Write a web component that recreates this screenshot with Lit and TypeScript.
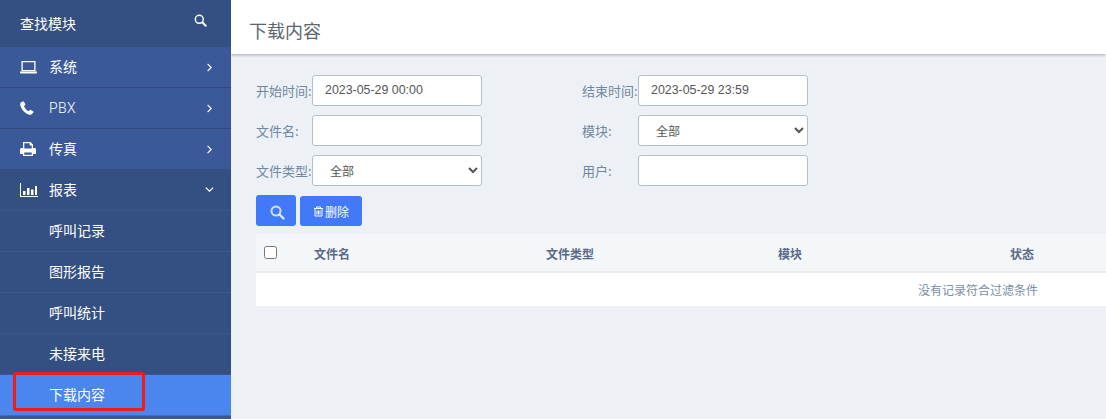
import { LitElement, html, css, svg } from "lit";
import { customElement } from "lit/decorators.js";

const icons: Record<string, any> = {
  laptop: svg`<svg width="17" height="13" viewBox="0 0 17 13"><path fill="none" stroke="#fff" stroke-width="1.300" d="M2.100.7h12.800v9H2.100z"/><path fill="#fff" d="M0 10.600h17v1.100l-.7.8H.7l-.7-.8z"/></svg>`,
  phone: svg`<svg width="14" height="14" viewBox="0 0 14 14"><path fill="#fff" d="M3.200.4 1 1.200C.2 2 0 3.400.500 4.900c1 3.400 4.600 7.500 8.200 8.500 1.300.4 2.500.3 3.300-.3l1.500-1.900c.2-.3.1-.6-.1-.8L10.800 8.900c-.3-.2-.6-.2-.8 0L8.600 10.300c-1.700-.6-4-3.300-4.600-5.300l1.100-1.100c.2-.2.300-.5.2-.8L3.900.7C3.800.4 3.500.3 3.200.4z"/></svg>`,
  print: svg`<svg width="16" height="14" viewBox="0 0 16 14"><path fill="#fff" fill-rule="evenodd" d="M3 0h7.500L13 2.500V6h1.300c1 0 1.700.7 1.700 1.600V12h-3v2H3v-2H0V7.600C0 6.700.7 6 1.700 6H3zM4.300 1.300V6.600h7.400V3.400H9.700V1.300zM4.300 10.400v2.300h7.400v-2.300z"/></svg>`,
  chart: svg`<svg width="18" height="14" viewBox="0 0 18 14"><path fill="#fff" d="M0 0h1v13h17v1H0zM3 8h2.500v4H3zM7 5h2.500v7H7zM11 6.500h2.500V12H11zM15 3h2v9h-2z"/></svg>`,
  search: svg`<svg width="13" height="13" viewBox="0 0 13 13"><circle cx="5.300" cy="5.300" r="4" fill="none" stroke="#fff" stroke-width="1.500"/><path stroke="#fff" stroke-width="2" stroke-linecap="round" d="M8.500 8.500l3.200 3.200"/></svg>`,
  right: svg`<svg width="5" height="9" viewBox="0 0 5 9"><path fill="none" stroke="#fff" stroke-width="1.200" d="M.6.8l3.600 3.700L.6 8.200"/></svg>`,
  down: svg`<svg width="9" height="5" viewBox="0 0 9 5"><path fill="none" stroke="#fff" stroke-width="1.200" d="M.8.6l3.700 3.600L8.200.6"/></svg>`,
};

@customElement("app-root")
export class AppRoot extends LitElement {
  static styles = css`
    :host {
      display: block;
      width: 1106px;
      height: 419px;
      overflow: hidden;
      font-family: "Noto Sans CJK SC", "Liberation Sans", sans-serif;
      font-size: 13px;
    }
    .page { display: flex; height: 419px; background: #edf1f5; position: relative; overflow: hidden; }
    .side { width: 231px; flex: none; background: #3a5795; color: #fff; position: relative; z-index: 2; }
    .find { height: 47px; background: #344f82; display: flex; justify-content: space-between; padding: 12px 24px 0 20px; box-sizing: border-box; font-size: 14px; line-height: 23px; }
    .find svg { margin-top: 2px; }
    .item { height: 41px; box-sizing: border-box; background: #3b5999; border-bottom: 1px solid #31497f; display: grid; grid-template-columns: 29px 1fr 5px; align-items: center; padding: 0 19px 0 20px; font-size: 14px; }
    .item.last { border-bottom: 0; height: 40px; }
    .item.open { height: 42px; background: #344f82; border-bottom: 1px solid #3a5795; grid-template-columns: 29px 1fr 9px; padding-right: 17px; }
    .item .ic { display: flex; align-items: center; }
    .item .lbl { padding-bottom: 2px; }
    .item .pbx { font-family: "Roboto", sans-serif; font-weight: 300; letter-spacing: .4px; }
    .sub { height: 41px; box-sizing: border-box; background: #344f82; border-bottom: 1px solid #3a5795; padding: 0 0 2px 49px; display: flex; align-items: center; font-size: 14px; }
    .sub.active { background: #4a86ee; border-bottom: 1px solid #3f6db8; }
    .redbox { position: absolute; left: 13px; top: 372px; width: 126px; height: 33px; border: 3px solid #f01c1c; border-radius: 3px; }
    .main { flex: 1; min-width: 0; display: flex; flex-direction: column; }
    .top { height: 54px; flex: none; box-sizing: border-box; background: #fff; box-shadow: 0 1px 3px rgba(0,0,0,.3); display: flex; align-items: center; padding: 5px 0 0 18px; font-size: 18px; color: #5c6670; }
    .body { padding: 21px 0 0 25px; }
    .form { display: grid; grid-template-columns: 56px 170px 100px 56px 170px; grid-auto-rows: 31px; row-gap: 9px; align-items: center; width: 552px; }
    .form label { font-size: 13px; color: #6f87a0; white-space: nowrap; padding-bottom: 1px; }
    input[type="text"], select {
      height: 31px; width: 170px; box-sizing: border-box; border: 1px solid #b1c1c8; border-radius: 3px;
      background: #fff; font: 12.400px "Liberation Sans", "Noto Sans CJK SC", sans-serif; color: #555; padding: 0 12px 2px; outline: none; margin: 0;
    }
    select { padding: 0 0 0 13px; font: 12px "Noto Sans CJK SC", sans-serif; }
    .btns { display: flex; gap: 4px; align-items: flex-end; margin-top: 9px; height: 31px; }
    .btn { background: #4279f9; border: 0; border-radius: 3px; color: #fff; display: flex; align-items: center; justify-content: center; padding: 0; font: 12px "Noto Sans CJK SC", sans-serif; }
    .b1 { width: 40px; height: 31px; }
    .b1 svg { margin: 3px 0 0 2px; }
    .b2 { width: 62px; height: 30px; gap: 1px; }
    .tablewrap { margin-top: 8px; width: 850px; overflow: hidden; }
    table { border-collapse: collapse; width: 1444px; table-layout: fixed; background: #fff; }
    th { background: #f3f7fa; height: 36px; border-bottom: 2px solid #e9edf0; padding: 1px 0 0; text-align: left; font-size: 12px; font-weight: 700; color: #5a6a85; box-sizing: content-box; }
    th.ck { width: 58px; padding: 0 0 1px; }
    th.c { width: 232px; }
    input[type="checkbox"] { margin: 0 0 0 8px; width: 13px; height: 13px; display: block; }
    td { height: 33px; padding: 0; text-align: center; color: #7b8ea6; font-size: 12px; }
  `;

  render() {
    return html`<div class="page">
      <aside class="side">
        <div class="find"><span>查找模块</span>${icons.search}</div>
        <div class="item"><span class="ic">${icons.laptop}</span><span class="lbl">系统</span>${icons.right}</div>
        <div class="item"><span class="ic">${icons.phone}</span><span class="pbx">PBX</span>${icons.right}</div>
        <div class="item last"><span class="ic">${icons.print}</span><span class="lbl">传真</span>${icons.right}</div>
        <div class="item open"><span class="ic">${icons.chart}</span><span class="lbl">报表</span>${icons.down}</div>
        <div class="sub">呼叫记录</div>
        <div class="sub">图形报告</div>
        <div class="sub">呼叫统计</div>
        <div class="sub">未接来电</div>
        <div class="sub active">下载内容</div>
        <div class="redbox"></div>
      </aside>
      <main class="main">
        <div class="top">下载内容</div>
        <div class="body">
          <div class="form">
            <label>开始时间:</label><input type="text" value="2023-05-29 00:00" /><span></span>
            <label>结束时间:</label><input type="text" value="2023-05-29 23:59" />
            <label>文件名:</label><input type="text" /><span></span>
            <label>模块:</label><select><option>全部</option></select>
            <label>文件类型:</label><select><option>全部</option></select><span></span>
            <label>用户:</label><input type="text" />
          </div>
          <div class="btns">
            <button class="btn b1"><svg width="15" height="15" viewBox="0 0 15 15"><circle cx="6" cy="6" r="4.500" fill="none" stroke="#cfe0ff" stroke-width="2"/><path stroke="#dfe9ff" stroke-width="2.400" stroke-linecap="round" d="M9.500 9.500l4 4"/></svg></button>
            <button class="btn b2"><svg width="11" height="11" viewBox="0 0 11 11"><path fill="none" stroke="#fff" d="M1 2.500h9M3.500 2.500V1h4v1.500M2 2.500V10h7V2.500M4 4.500V8.500M5.500 4.500V8.500M7 4.500V8.500"/></svg><span>删除</span></button>
          </div>
          <div class="tablewrap">
            <table>
              <thead><tr>
                <th class="ck"><input type="checkbox" /></th>
                <th class="c">文件名</th><th class="c">文件类型</th><th class="c">模块</th><th class="c">状态</th><th></th>
              </tr></thead>
              <tbody><tr><td colspan="6">没有记录符合过滤条件</td></tr></tbody>
            </table>
          </div>
        </div>
      </main>
    </div>`;
  }
}
